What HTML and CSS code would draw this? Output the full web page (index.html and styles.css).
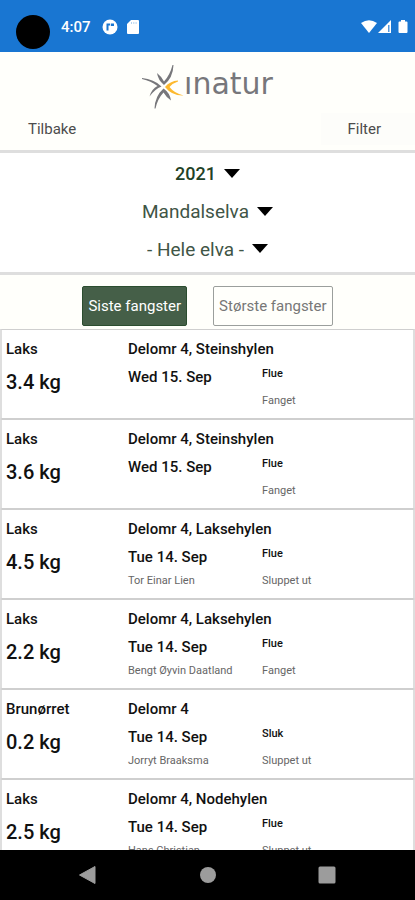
FILE: index.html
```html
<!DOCTYPE html>
<html lang="no">
<head>
<meta charset="utf-8">
<meta name="viewport" content="width=device-width, initial-scale=1">
<title>inatur</title>
<link rel="stylesheet" href="styles.css">
</head>
<body>
<div class="status">
  <span class="camera"></span>
  <span class="clock">4:07</span>
  <svg class="status-icon" width="16" height="16" viewBox="0 0 16 16"><circle cx="8" cy="8" r="7.5" fill="#fff"/><path d="M5.500 11.500V5.500H8" fill="none" stroke="#1976d2" stroke-width="2"/><path d="M8.800 4.500h3.200v2.500h-3.200z" fill="#1976d2"/></svg>
  <svg class="status-icon" width="12" height="14" viewBox="0 0 12 14"><path d="M4 0h7a1 1 0 0 1 1 1v12a1 1 0 0 1-1 1H1a1 1 0 0 1-1-1V4z" fill="#fff"/><path d="M4.500 2v2M6.800 2v2M9.100 2v2" stroke="#1976d2" stroke-width=".8" opacity=".4"/></svg>
  <svg class="signals" width="48" height="16" viewBox="0 0 48 16"><path d="M0 4Q8 -1.500 16 4L8 14z" fill="#fff"/><path d="M30 1v13H17z" fill="#fff"/><path d="M27 6v7h1.500V6z" fill="#1976d2" opacity=".75"/><path d="M40 1h4v1.500h1.500a1 1 0 0 1 1 1V13a1 1 0 0 1-1 1h-7a1 1 0 0 1-1-1V3.500a1 1 0 0 1 1-1H40z" fill="#fff"/></svg>
</div>
<header class="header">
  <div class="brand">
    <svg width="42" height="44" viewBox="0 0 42 44"><path d="M0 13Q12 14 19.500 21.500Q13 24 7.500 31.500Q9.500 24 15.500 21Q9 16 0 14zM15 8Q20 12 22 16.500Q28 10 30.500 0H31.500Q31 13 22 20Q16 15 15 8zM12.500 43.500Q13 31 21.500 23.500Q28 28 29 35.500Q24 32 21.500 27.500Q15.500 34 13.500 43.500z" fill="#77777b"/><path d="M36 15.500Q28 16 23 22Q30 31 41.500 30.500Q32 28 27.500 22Q31 18 36 16.500z" fill="#fdb92e"/></svg>
    <span class="wordmark">ınatur</span>
  </div>
  <nav class="header-nav">
    <button class="text-button back" type="button">Tilbake</button>
    <button class="text-button filter" type="button">Filter</button>
  </nav>
</header>
<section class="selectors">
  <div class="selector year"><select aria-label="År"><option>2021</option></select><svg width="16" height="10" viewBox="0 0 16 10"><path d="M0 1h16L8 10z"/></svg></div>
  <div class="selector"><select aria-label="Elv"><option>Mandalselva</option></select><svg width="16" height="10" viewBox="0 0 16 10"><path d="M0 1h16L8 10z"/></svg></div>
  <div class="selector"><select aria-label="Sone"><option>- Hele elva -</option></select><svg width="16" height="10" viewBox="0 0 16 10"><path d="M0 0h16L8 9z"/></svg></div>
</section>
<div class="tabs">
  <button class="tab active" type="button">Siste fangster</button>
  <button class="tab" type="button">Største fangster</button>
</div>
<main class="catches">
  <article class="catch"><div class="fish"><span class="title">Laks</span><span class="weight">3.4 kg</span></div><span class="title place">Delomr 4, Steinshylen</span><div class="when"><span class="title">Wed 15. Sep</span></div><div class="how"><span class="gear">Flue</span><span class="small">Fanget</span></div></article>
  <article class="catch"><div class="fish"><span class="title">Laks</span><span class="weight">3.6 kg</span></div><span class="title place">Delomr 4, Steinshylen</span><div class="when"><span class="title">Wed 15. Sep</span></div><div class="how"><span class="gear">Flue</span><span class="small">Fanget</span></div></article>
  <article class="catch"><div class="fish"><span class="title">Laks</span><span class="weight">4.5 kg</span></div><span class="title place">Delomr 4, Laksehylen</span><div class="when"><span class="title">Tue 14. Sep</span><span class="small">Tor Einar Lien</span></div><div class="how"><span class="gear">Flue</span><span class="small">Sluppet ut</span></div></article>
  <article class="catch"><div class="fish"><span class="title">Laks</span><span class="weight">2.2 kg</span></div><span class="title place">Delomr 4, Laksehylen</span><div class="when"><span class="title">Tue 14. Sep</span><span class="small">Bengt Øyvin Daatland</span></div><div class="how"><span class="gear">Flue</span><span class="small">Fanget</span></div></article>
  <article class="catch"><div class="fish"><span class="title">Brunørret</span><span class="weight">0.2 kg</span></div><span class="title place">Delomr 4</span><div class="when"><span class="title">Tue 14. Sep</span><span class="small">Jorryt Braaksma</span></div><div class="how"><span class="gear">Sluk</span><span class="small">Sluppet ut</span></div></article>
  <article class="catch"><div class="fish"><span class="title">Laks</span><span class="weight">2.5 kg</span></div><span class="title place">Delomr 4, Nodehylen</span><div class="when"><span class="title">Tue 14. Sep</span><span class="small">Hans Christian</span></div><div class="how"><span class="gear">Flue</span><span class="small">Sluppet ut</span></div></article>
</main>
<nav class="system">
  <button type="button" aria-label="Tilbake"><svg width="18" height="18" viewBox="0 0 18 18"><path d="M16 .5v17L.5 9z" fill="#9c9c9c" stroke="#9c9c9c" stroke-linejoin="round"/></svg></button>
  <button type="button" aria-label="Hjem"><svg width="18" height="18" viewBox="0 0 18 18"><circle cx="9" cy="9" r="8" fill="#9c9c9c"/></svg></button>
  <button type="button" aria-label="Oversikt"><svg width="18" height="18" viewBox="0 0 18 18"><rect x=".5" y=".5" width="17" height="17" rx="1.500" fill="#9c9c9c"/></svg></button>
</nav>
</body>
</html>
```
FILE: styles.css
```css
* { box-sizing: border-box; }
body {
  margin: 0;
  height: 100vh;
  display: flex;
  flex-direction: column;
  overflow: hidden;
  background: #fffffb;
  color: #111;
  font-family: Roboto, sans-serif;
}
body > * { flex: none; }
button, select {
  margin: 0;
  padding: 0;
  border: 0;
  background: none;
  color: inherit;
  font: inherit;
}
svg { display: block; flex: none; }

.status {
  height: 52px;
  padding: 2px 6px 0 16px;
  display: flex;
  align-items: center;
  background: #1976d2;
  color: #fff;
}
.camera {
  width: 34px;
  height: 34px;
  margin: 10px 11px 0 0;
  border-radius: 50%;
  background: #000;
}
.clock { font-size: 15px; font-weight: 500; margin-right: 11px; }
.status-icon { margin-right: 9px; }
.signals { margin-left: auto; }

.header { border-bottom: 3px solid #dedede; }
.brand {
  height: 58px;
  padding-top: 13px;
  display: flex;
  justify-content: center;
}
.wordmark {
  font: 30px/38px "DejaVu Sans", sans-serif;
  color: #77777b;
}
.header-nav {
  height: 40px;
  padding-bottom: 2px;
  display: flex;
  justify-content: space-between;
  align-items: center;
}
.text-button {
  height: 32px;
  padding: 0 28px;
  font-size: 15px;
  color: #4c4c4c;
}
.filter { padding: 0 34px 0 26px; background: #fdfdfa; }

.selectors {
  padding: 1px 0 4px;
  background: #fff;
  border-bottom: 3px solid #dedede;
}
.selector {
  height: 38px;
  display: flex;
  justify-content: center;
  align-items: center;
  gap: 8px;
  font-size: 19px;
  color: #3f5546;
}
.selector select {
  appearance: none;
  field-sizing: content;
  height: 28px;
}
.selector svg { fill: #000; }
.year { font-size: 18px; font-weight: 500; color: #1f4227; }

.tabs {
  height: 54px;
  padding-top: 8px;
  display: flex;
  justify-content: center;
  gap: 26px;
  align-items: center;
}
.tab {
  height: 40px;
  padding: 0 5px;
  border: 1px solid #9b9f9c;
  border-radius: 2px;
  font-size: 15px;
  color: #777;
}
.tab.active {
  background: #455f48;
  border-color: #2b4d2f;
  color: #fff;
}

.catches { flex: 1; min-height: 0; overflow: hidden; background: #fff; }
.catch {
  height: 90px;
  padding: 9px 4px 0;
  border: 1px solid #cfcfcf;
  border-left: 2px solid #dedede;
  border-right: 2px solid #dedede;
  display: grid;
  grid-template-columns: 122fr 134fr 147fr;
  grid-template-rows: 20px 54px;
}
.catch span { line-height: 20px; white-space: nowrap; }
.fish, .when, .how { display: flex; flex-direction: column; }
.fish { grid-row: 1 / 3; gap: 13px; }
.when, .how { padding-top: 8px; }
.when { gap: 4px; }
.how { gap: 7px; padding-top: 5px; }
.place { grid-column: 2 / 4; }
.title { font-size: 15px; font-weight: 500; }
.weight { font-size: 20px; font-weight: 500; }
.gear { font-size: 11px; font-weight: 500; }
.small { font-size: 11px; color: #666; }

.system {
  height: 50px;
  padding: 0 28px;
  display: flex;
  align-items: center;
  background: #000;
}
.system button {
  flex: 1;
  height: 50px;
  display: flex;
  justify-content: center;
  align-items: center;
}
```
